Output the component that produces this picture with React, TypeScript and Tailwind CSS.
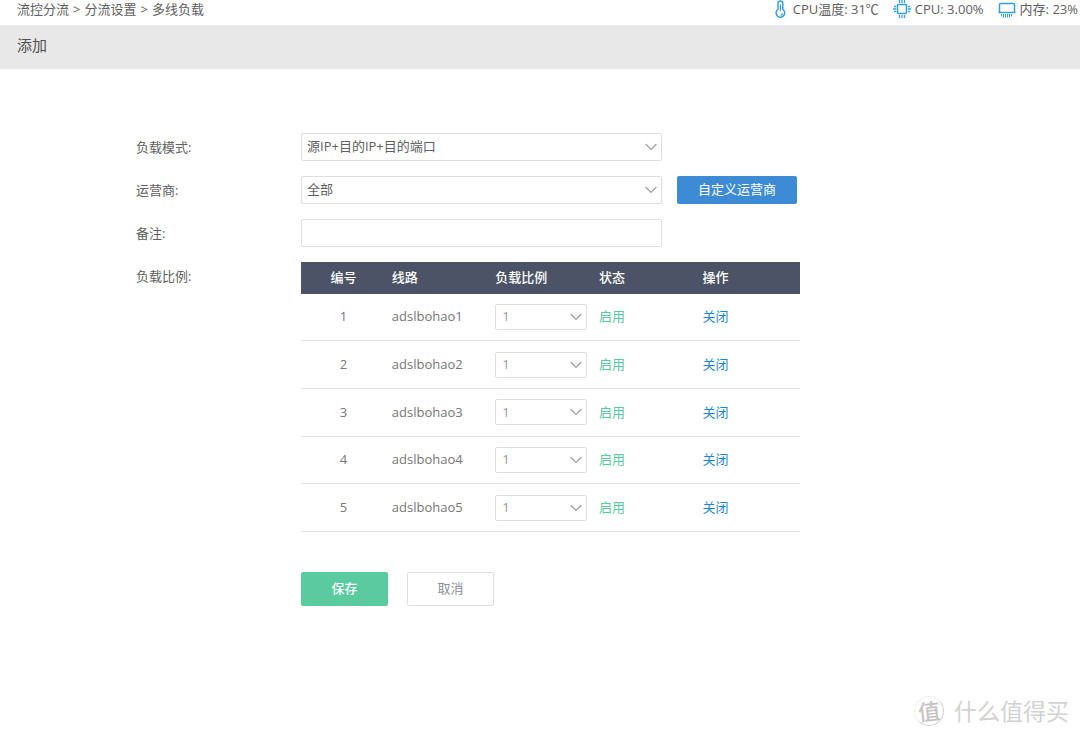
import { useState } from 'react'
import type { ReactNode, SelectHTMLAttributes } from 'react'

const crumbs = ['流控分流', '分流设置', '多线负载']

const lines = ['adslbohao1', 'adslbohao2', 'adslbohao3', 'adslbohao4', 'adslbohao5']

function ThermometerIcon() {
  return (
    <svg width="14" height="18" viewBox="0 0 14 18" fill="none" stroke="#35a0d8" strokeWidth="1.5" aria-hidden="true">
      <path d="M3 9.4V3.4a2.4 2.4 0 0 1 4.8 0v6a4.3 4.3 0 1 1-4.8 0Z" />
      <path d="M5.4 4.5v6.5" strokeWidth="1.2" />
      <path d="M7.6 13.2a2.2 2.2 0 0 1-2 2.1" strokeWidth="1.2" />
    </svg>
  )
}

function CpuIcon() {
  return (
    <svg width="18" height="18" viewBox="0 0 18 18" fill="none" stroke="#35a0d8" strokeWidth="1.6" aria-hidden="true">
      <rect x="4.5" y="4.5" width="9" height="9" rx="1" />
      <path
        d="M6.5 0v3M9 0v3M11.5 0v3M6.5 15v3M9 15v3M11.5 15v3M1 6.5h2M0 9h3M1 11.5h2M15 6.5h2M15 9h3M15 11.5h2"
        strokeWidth="1.3"
      />
    </svg>
  )
}

function MemoryIcon() {
  return (
    <svg width="18" height="18" viewBox="0 0 18 18" fill="none" stroke="#35a0d8" strokeWidth="1.5" aria-hidden="true">
      <path d="M1.5 12V4.5c0-.6.4-1 1-1h13c.6 0 1 .4 1 1V12M.5 12.5h17" />
      <path d="M3.5 14v2.6M5.5 14v3.4M7.5 14v3.4M9.5 14v3.4M11.5 14v3.4M13.5 14v2.6" strokeWidth="1.1" />
    </svg>
  )
}

function Stat({ icon, children }: { icon: ReactNode; children: ReactNode }) {
  return (
    <li className="flex items-center gap-1">
      {icon}
      <span>{children}</span>
    </li>
  )
}

function Select({ className, ...props }: SelectHTMLAttributes<HTMLSelectElement>) {
  return (
    <div className="relative">
      <select
        {...props}
        className={`w-full appearance-none rounded-xs border border-[#dedede] bg-white outline-none focus:border-[#3d8bd4] ${className}`}
      />
      <svg
        className="pointer-events-none absolute top-1/2 right-[5px] -translate-y-1/2"
        width="12"
        height="8"
        viewBox="0 0 12 8"
        fill="none"
        stroke="#a0a0a0"
        strokeWidth="1.3"
        aria-hidden="true"
      >
        <path d="M.6 1 6 6.4 11.4 1" />
      </svg>
    </div>
  )
}

function Watermark() {
  return (
    <div className="pointer-events-none absolute right-[11px] bottom-[8px] flex items-center gap-[10px] text-[#d2d2d2]">
      <span className="flex size-[30px] items-center justify-center rounded-full border border-[#eee] border-r-[#cfcfcf] border-b-[#cfcfcf]">
        <span className="-rotate-6 text-[22px] leading-none font-medium text-[#c4c4c4]">值</span>
      </span>
      <span className="text-[23px] leading-9">什么值得买</span>
    </div>
  )
}

export default function App() {
  const [closed, setClosed] = useState<string[]>([])

  const toggle = (line: string) =>
    setClosed(closed.includes(line) ? closed.filter((l) => l !== line) : [...closed, line])

  return (
    <div className="relative min-h-screen bg-white font-['Open_Sans','Noto_Sans_CJK_SC',sans-serif] text-[13px] text-[#606060]">
      <header className="flex h-[25px] justify-between pr-[2px] pl-[17px] leading-[18px]">
        <nav aria-label="breadcrumb">
          <ol className="flex gap-1">
            {crumbs.map((crumb, i) => (
              <li key={crumb} className="flex gap-1">
                {i > 0 && <span>&gt;</span>}
                {crumb}
              </li>
            ))}
          </ol>
        </nav>
        <ul className="flex h-[18px] gap-[14px]">
          <Stat icon={<ThermometerIcon />}>CPU温度: 31℃</Stat>
          <Stat icon={<CpuIcon />}>CPU: 3.00%</Stat>
          <Stat icon={<MemoryIcon />}>内存: 23%</Stat>
        </ul>
      </header>

      <h1 className="bg-[#e8e8e8] pb-1 pl-[17px] text-[15px] leading-10 text-[#505050]">添加</h1>

      <form
        className="mx-[136px] mt-[64px] grid max-w-[664px] grid-cols-[165px_1fr] gap-y-[15px] pb-20"
        onSubmit={(e) => e.preventDefault()}
      >
        <label htmlFor="mode" className="leading-[28px]">负载模式:</label>
        <div className="max-w-[361px]">
          <Select id="mode" className="h-[28px] pr-6 pl-[5px]">
            <option>源IP+目的IP+目的端口</option>
          </Select>
        </div>

        <label htmlFor="isp" className="leading-[28px]">运营商:</label>
        <div className="flex gap-[15px]">
          <div className="w-[361px]">
            <Select id="isp" className="h-[28px] pr-6 pl-[5px]">
              <option>全部</option>
            </Select>
          </div>
          <button type="button" className="h-[28px] w-[120px] rounded-xs bg-[#3d8bd4] text-white">
            自定义运营商
          </button>
        </div>

        <label htmlFor="remark" className="leading-[28px]">备注:</label>
        <input
          id="remark"
          type="text"
          className="h-[28px] w-full max-w-[361px] rounded-xs border border-[#dedede] px-[5px] outline-none focus:border-[#3d8bd4]"
        />

        <span className="leading-[28px]">负载比例:</span>
        <div>
          <table className="h-[270px] w-full table-fixed border-collapse text-left">
            <thead className="h-8 bg-[#4c5366] text-white">
              <tr>
                <th className="w-[17%] text-center font-medium">编号</th>
                <th className="px-[6px] font-medium">线路</th>
                <th className="px-[6px] font-medium">负载比例</th>
                <th className="px-[6px] font-medium">状态</th>
                <th className="px-[6px] font-medium">操作</th>
              </tr>
            </thead>
            <tbody className="text-[#777]">
              {lines.map((line, i) => (
                <tr key={line} className="border-b border-[#dedede]">
                  <td className="text-center">{i + 1}</td>
                  <td className="px-[6px]">{line}</td>
                  <td className="px-[6px]">
                    <Select aria-label={line} className="h-[26px] pr-5 pl-[6px] text-[#999]">
                      <option>1</option>
                      <option>2</option>
                      <option>3</option>
                    </Select>
                  </td>
                  <td className="px-[6px] text-[#5acb9f]">{closed.includes(line) ? '停用' : '启用'}</td>
                  <td className="px-[6px]">
                    <button type="button" className="text-[#1b87cf]" onClick={() => toggle(line)}>
                      {closed.includes(line) ? '开启' : '关闭'}
                    </button>
                  </td>
                </tr>
              ))}
            </tbody>
          </table>

          <div className="mt-10 flex gap-[19px]">
            <button type="submit" className="h-[34px] w-[87px] rounded-xs bg-[#5acb9f] font-medium text-white">
              保存
            </button>
            <button type="button" className="h-[34px] w-[87px] rounded-xs border border-[#dedede] text-[#899096]">
              取消
            </button>
          </div>
        </div>
      </form>

      <Watermark />
    </div>
  )
}
